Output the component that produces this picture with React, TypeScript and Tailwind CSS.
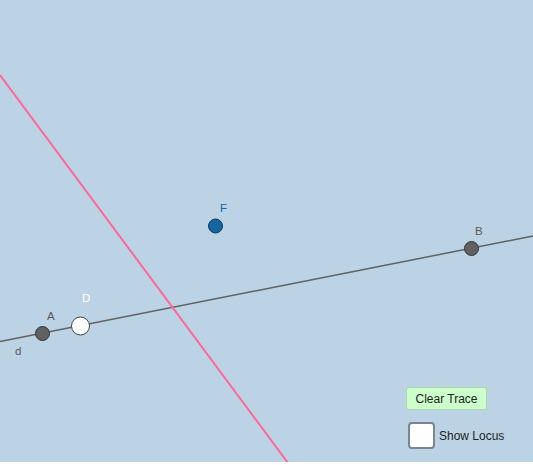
export default function App() {
  return (
    <div className="relative h-[462px] w-[533px] overflow-hidden bg-[#bcd3e6] font-['Liberation_Sans',Arial,sans-serif]">
      <svg className="absolute left-0 top-0" width={533} height={462} viewBox="0 0 533 462">
        <line x1={0} y1={341.5} x2={533} y2={236} stroke="#616161" strokeWidth={1.5} />
        <line x1={0} y1={75} x2={288} y2={463} stroke="#ff6699" strokeWidth={2} />
        <circle cx={42.5} cy={333.5} r={7} fill="#616161" stroke="#333" strokeWidth={1} />
        <circle cx={80.5} cy={326} r={9} fill="#fff" stroke="#444" strokeWidth={1} />
        <circle cx={471.5} cy={248.5} r={7} fill="#616161" stroke="#333" strokeWidth={1} />
        <circle cx={215.5} cy={226} r={7} fill="#1565a0" stroke="#103a5c" strokeWidth={1} />
        <g fontFamily="'Liberation Sans', Arial, sans-serif" fontSize={11.5}>
          <text x={47} y={320} fill="#5a5a5a">A</text>
          <text x={82} y={302} fill="#fff">D</text>
          <text x={475} y={235} fill="#5a5a5a">B</text>
          <text x={220} y={212} fill="#1565a0">F</text>
          <text x={15} y={355} fill="#5a5a5a">d</text>
        </g>
      </svg>
      <button className="absolute left-[406px] top-[387px] h-[23px] w-[81px] rounded-[3px] border border-[#a8d8a8] bg-[#ccffcc] text-[12px] text-[#222]">
        Clear Trace
      </button>
      <div className="absolute left-[408px] top-[422px] flex items-center gap-[4px]">
        <div className="h-[27px] w-[27px] rounded-[4px] border-2 border-[#7a8590] bg-white" />
        <span className="text-[12px] text-[#222]">Show Locus</span>
      </div>
    </div>
  );
}
